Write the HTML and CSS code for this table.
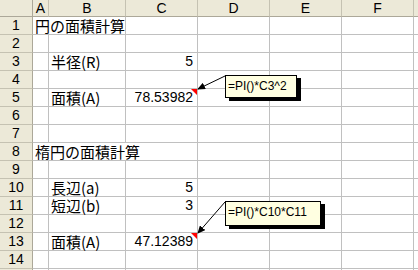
FILE: index.html
```html
<!DOCTYPE html>
<html lang="ja">
<head>
    <meta charset="UTF-8">
    <meta name="viewport" content="width=device-width, initial-scale=1.0">
    <title>面積計算</title>
    <link rel="stylesheet" href="styles.css">
</head>
<body>
    <div class="sheet">
        <div class="grid" id="grid">
            <!-- Cells are built by the script below -->
        </div>

        <!-- Comment arrows pointing at the formula cells -->
        <svg class="arrows" width="418" height="270" viewBox="0 0 418 270">
            <defs>
                <marker id="head" markerWidth="8" markerHeight="7" refX="7" refY="3.5" orient="auto" markerUnits="userSpaceOnUse">
                    <path d="M0,0 L8,3.5 L0,7 Z" fill="#000"/>
                </marker>
            </defs>
            <line x1="225" y1="76" x2="198" y2="89" stroke="#000" stroke-width="1" marker-end="url(#head)"/>
            <line x1="225" y1="202" x2="198" y2="233" stroke="#000" stroke-width="1" marker-end="url(#head)"/>
        </svg>

        <div class="comment comment-c5">=PI()*C3^2</div>
        <div class="comment comment-c13">=PI()*C10*C11</div>
    </div>

    <script>
        // the last column and row are only partly on screen, so they get no label
        const columns = ['A', 'B', 'C', 'D', 'E', 'F', ''];
        const rowCount = 15;
        const labelledRows = 14;

        // cell contents keyed by address
        const cells = {
            A1: { text: '円の面積計算', span: 2 },
            B3: { text: '半径(R)' },
            C3: { text: '5', num: true },
            B5: { text: '面積(A)' },
            C5: { text: '78.53982', num: true, note: true },
            A8: { text: '楕円の面積計算', span: 3 },
            B10: { text: '長辺(a)' },
            C10: { text: '5', num: true },
            B11: { text: '短辺(b)' },
            C11: { text: '3', num: true },
            B13: { text: '面積(A)' },
            C13: { text: '47.12389', num: true, note: true }
        };

        function buildSheet() {
            const grid = document.getElementById('grid');

            // column headers
            const corner = document.createElement('div');
            corner.className = 'head corner';
            grid.appendChild(corner);
            columns.forEach(col => {
                const h = document.createElement('div');
                h.className = 'head col-head';
                h.textContent = col;
                grid.appendChild(h);
            });

            for (let r = 1; r <= rowCount; r++) {
                const rh = document.createElement('div');
                rh.className = 'head row-head';
                if (r <= labelledRows) rh.textContent = r;
                grid.appendChild(rh);

                let skip = 0;
                columns.forEach(col => {
                    if (skip > 0) { skip--; return; }
                    const data = col ? cells[col + r] : null;
                    const cell = document.createElement('div');
                    cell.className = 'cell';
                    if (data) {
                        cell.textContent = data.text;
                        if (data.num) cell.classList.add('num');
                        if (data.span) {
                            cell.style.gridColumn = 'span ' + data.span;
                            skip = data.span - 1;
                        }
                        if (data.note) {
                            const mark = document.createElement('span');
                            mark.className = 'note-mark';
                            cell.appendChild(mark);
                        }
                    }
                    grid.appendChild(cell);
                });
            }
        }

        buildSheet();
    </script>
</body>
</html>
```

FILE: styles.css
```css
html, body {
    margin: 0;
    padding: 0;
    background-color: #fff;
    overflow: hidden;
}
.sheet {
    position: relative;
    width: 418px;
    height: 270px;
    overflow: hidden;
    font-family: "Noto Sans CJK JP", sans-serif;
    font-size: 15px;
    color: #000;
}
.grid {
    display: grid;
    grid-template-columns: 33px 16px 77px 72px 72px 72px 72px 60px;
    grid-template-rows: 17px;
    grid-auto-rows: 18px;
}
.head {
    box-sizing: border-box;
    background-color: #ece9d8;
    border-right: 1px solid #c5c2b2;
    border-bottom: 1px solid #c5c2b2;
    text-align: center;
    font-family: "Liberation Sans", sans-serif;
    font-size: 14px;
    line-height: 17px;
}
.col-head {
    border-bottom-color: #aca899;
    line-height: 16px;
}
.corner {
    border-bottom-color: #aca899;
    border-right-color: #aca899;
}
.row-head {
    border-right-color: #aca899;
}
.cell {
    position: relative;
    box-sizing: border-box;
    border-right: 1px solid #c0c0c0;
    border-bottom: 1px solid #c0c0c0;
    padding: 0 2px;
    line-height: 17px;
    white-space: nowrap;
}
.num {
    text-align: right;
    padding-right: 4px;
    font-family: "Liberation Sans", sans-serif;
    font-size: 14px;
}
.note-mark {
    position: absolute;
    top: 0;
    right: 0;
    width: 0;
    height: 0;
    border-top: 6px solid #ff0000;
    border-left: 6px solid transparent;
}
.arrows {
    position: absolute;
    left: 0;
    top: 0;
    pointer-events: none;
}
.comment {
    position: absolute;
    left: 225px;
    box-sizing: border-box;
    background-color: #ffffe1;
    border: 1px solid #000;
    box-shadow: 4px 3px 0 #000;
    padding: 3px 0 0 2px;
    font-family: "Liberation Sans", sans-serif;
    font-size: 12px;
    line-height: 14px;
    white-space: nowrap;
}
.comment-c5 {
    top: 75px;
    width: 72px;
    height: 23px;
}
.comment-c13 {
    top: 201px;
    width: 96px;
    height: 25px;
}
```
